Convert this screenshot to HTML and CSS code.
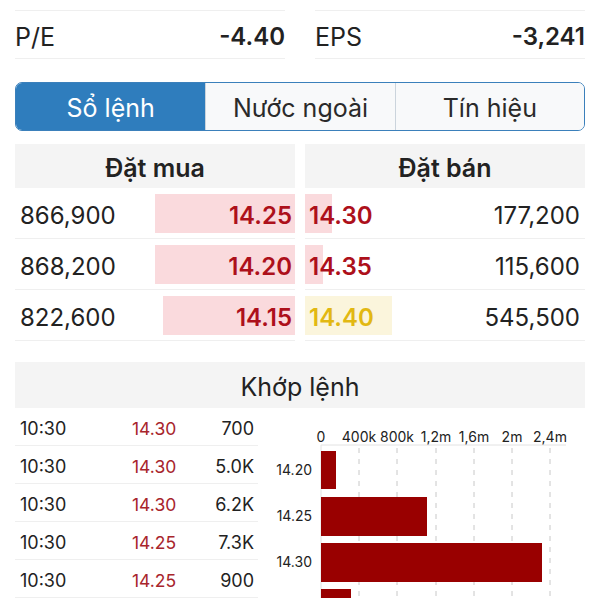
FILE: index.html
```html
<!DOCTYPE html>
<html lang="vi">
<head>
    <meta charset="UTF-8">
    <meta name="viewport" content="width=device-width, initial-scale=1.0">
    <title>Sổ lệnh</title>
    <link rel="stylesheet" href="styles.css">
</head>
<body>
    <div class="stats">
        <div class="stat"><span>P/E</span><span class="stat-value">-4.40</span></div>
        <div class="stat"><span>EPS</span><span class="stat-value">-3,241</span></div>
    </div>

    <div class="tabs">
        <div class="tab active">Sổ lệnh</div>
        <div class="tab">Nước ngoài</div>
        <div class="tab">Tín hiệu</div>
    </div>

    <div class="book">
        <div class="book-side">
            <div class="book-head">Đặt mua</div>
            <div class="book-row"><div class="cell bid" style="--w:140px"><span>866,900</span><span class="price up">14.25</span></div></div>
            <div class="book-row"><div class="cell bid" style="--w:140px"><span>868,200</span><span class="price up">14.20</span></div></div>
            <div class="book-row"><div class="cell bid" style="--w:132px"><span>822,600</span><span class="price up">14.15</span></div></div>
        </div>
        <div class="book-side">
            <div class="book-head">Đặt bán</div>
            <div class="book-row"><div class="cell ask" style="--w:27px"><span class="price up">14.30</span><span>177,200</span></div></div>
            <div class="book-row"><div class="cell ask" style="--w:18px"><span class="price up">14.35</span><span>115,600</span></div></div>
            <div class="book-row"><div class="cell ask ref" style="--w:87px"><span class="price ref-text">14.40</span><span>545,500</span></div></div>
        </div>
    </div>

    <div class="match">
        <div class="match-head">Khớp lệnh</div>
        <div class="match-body">
            <div class="trades">
                <div class="trade"><span>10:30</span><span class="trade-price">14.30</span><span class="qty">700</span></div>
                <div class="trade"><span>10:30</span><span class="trade-price">14.30</span><span class="qty">5.0K</span></div>
                <div class="trade"><span>10:30</span><span class="trade-price">14.30</span><span class="qty">6.2K</span></div>
                <div class="trade"><span>10:30</span><span class="trade-price">14.25</span><span class="qty">7.3K</span></div>
                <div class="trade"><span>10:30</span><span class="trade-price">14.25</span><span class="qty">900</span></div>
            </div>
            <svg class="chart" width="330" height="190" viewBox="0 0 330 190">
                <g class="ticks" text-anchor="middle">
                    <text x="51" y="34">0</text>
                    <text x="89" y="34">400k</text>
                    <text x="127" y="34">800k</text>
                    <text x="166" y="34">1,2m</text>
                    <text x="204" y="34">1,6m</text>
                    <text x="242" y="34">2m</text>
                    <text x="280" y="34">2,4m</text>
                </g>
                <line x1="51" y1="37" x2="296" y2="37" stroke="#e2e2e2"/>
                <line x1="51" y1="37" x2="51" y2="190" stroke="#e2e2e2"/>
                <g stroke="#c8c8c8" stroke-dasharray="5 6">
                    <line x1="89" y1="40" x2="89" y2="190"/>
                    <line x1="127" y1="40" x2="127" y2="190"/>
                    <line x1="166" y1="40" x2="166" y2="190"/>
                    <line x1="204" y1="40" x2="204" y2="190"/>
                    <line x1="242" y1="40" x2="242" y2="190"/>
                    <line x1="280" y1="40" x2="280" y2="190"/>
                </g>
                <g fill="#990000">
                    <rect x="51" y="43" width="15" height="38"/>
                    <rect x="51" y="89" width="106" height="39"/>
                    <rect x="51" y="135" width="221" height="39"/>
                    <rect x="51" y="181" width="30" height="39"/>
                </g>
                <g class="levels" text-anchor="end">
                    <text x="42" y="67">14.20</text>
                    <text x="42" y="113">14.25</text>
                    <text x="42" y="159">14.30</text>
                </g>
            </svg>
        </div>
    </div>
</body>
</html>
```

FILE: styles.css
```css
html, body {
    height: 600px;
    overflow: hidden;
}
body {
    margin: 0;
    background-color: #fff;
    color: #222;
    font-family: Inter, "Noto Sans", sans-serif;
}
.stats {
    display: grid;
    grid-template-columns: 1fr 1fr;
    column-gap: 30px;
    padding: 10px 15px 0;
}
.stat {
    display: flex;
    justify-content: space-between;
    align-items: center;
    height: 49px;
    padding-top: 4px;
    box-sizing: border-box;
    border-top: 1px solid #efefef;
    border-bottom: 1px solid #efefef;
    font-size: 25px;
}
.stat-value {
    font-weight: 600;
    font-size: 24px;
}
.tabs {
    display: grid;
    grid-template-columns: repeat(3, 1fr);
    margin: 23px 15px 0;
    height: 49px;
    box-sizing: border-box;
    border: 1px solid #3b80bb;
    border-radius: 7px;
    overflow: hidden;
}
.tab {
    display: flex;
    align-items: center;
    justify-content: center;
    padding-top: 3px;
    font-size: 25px;
    color: #2a2a2a;
    background-color: #f8f9fa;
    border-left: 1px solid #cbd4dc;
}
.tab.active {
    background-color: #2f7dbd;
    color: #fff;
    border-left: none;
}
.book {
    display: grid;
    grid-template-columns: 1fr 1fr;
    column-gap: 10px;
    margin-top: 13px;
    padding: 0 15px;
}
.book-head {
    display: flex;
    align-items: center;
    justify-content: center;
    height: 44px;
    padding-top: 3px;
    box-sizing: border-box;
    background-color: #f4f4f4;
    font-size: 25px;
    font-weight: 600;
}
.book-row {
    padding: 6px 0 5px;
    border-bottom: 1px solid #efefef;
}
.cell {
    display: flex;
    justify-content: space-between;
    align-items: center;
    height: 39px;
    padding-top: 4px;
    box-sizing: border-box;
    font-size: 24px;
    background-image: linear-gradient(#fadadd, #fadadd);
    background-repeat: no-repeat;
    background-size: var(--w) 100%;
}
.bid {
    padding-left: 5px;
    padding-right: 3px;
    background-position: right;
}
.ask {
    padding-left: 4px;
    padding-right: 5px;
    background-position: left;
}
.ask.ref {
    background-image: linear-gradient(#fbf5dc, #fbf5dc);
}
.price {
    font-weight: 600;
}
.up {
    color: #ad101b;
}
.ref-text {
    color: #e2b812;
}
.match {
    margin-top: 21px;
}
.match-head {
    display: flex;
    align-items: center;
    justify-content: center;
    height: 46px;
    margin: 0 15px;
    padding-top: 3px;
    box-sizing: border-box;
    background-color: #f4f4f4;
    font-size: 25px;
}
.match-body {
    display: flex;
    align-items: flex-start;
}
.trades {
    width: 243px;
    margin-left: 15px;
}
.trade {
    display: grid;
    grid-template-columns: 112px 60px 1fr;
    align-items: center;
    height: 33px;
    padding: 4px 4px 0 5px;
    border-bottom: 1px solid #efefef;
    font-size: 18px;
}
.trade-price {
    color: #a8252c;
    font-size: 17.5px;
}
.qty {
    text-align: right;
}
.chart {
    display: block;
    margin-left: 12px;
    flex: none;
}
.ticks {
    font-size: 14px;
    fill: #222;
}
.levels {
    font-size: 14px;
    fill: #222;
}
```
